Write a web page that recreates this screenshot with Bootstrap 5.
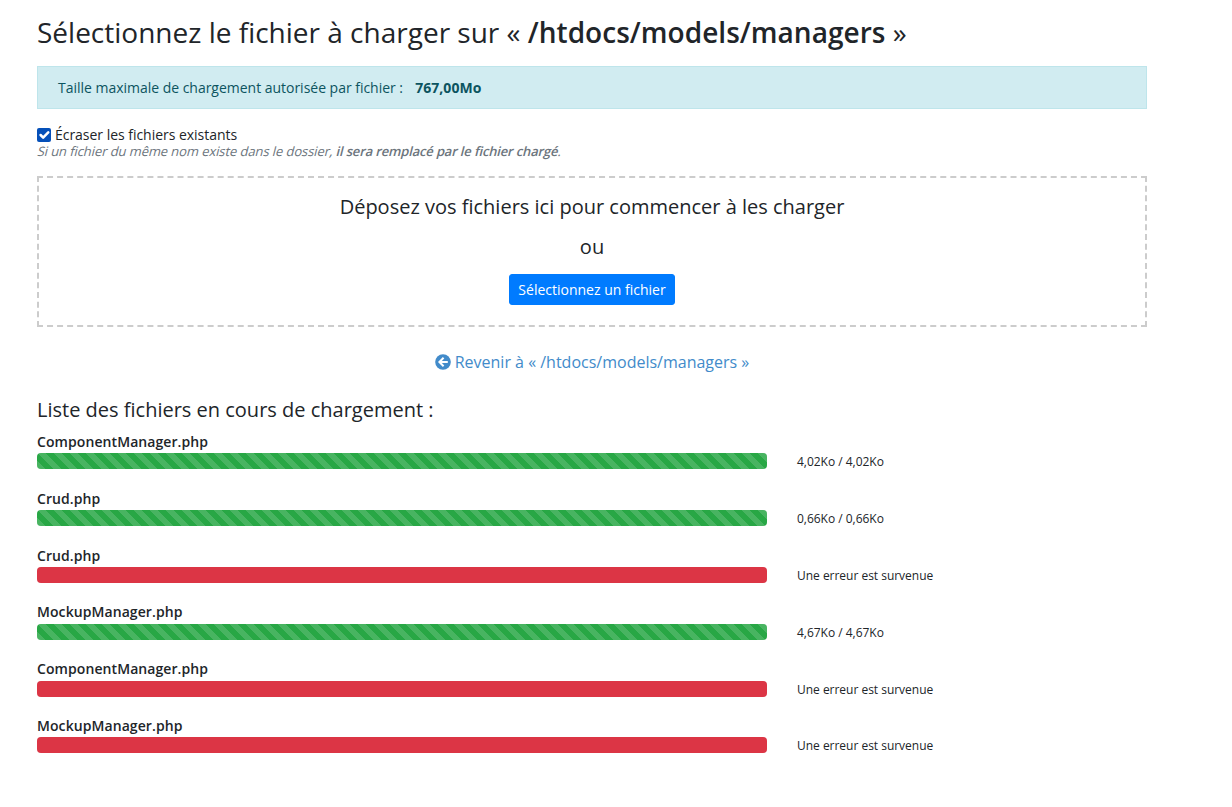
<!DOCTYPE html>
<html lang="fr">
<head>
<meta charset="utf-8">
<meta name="viewport" content="width=device-width, initial-scale=1">
<title>Charger un fichier</title>
<link href="https://cdn.jsdelivr.net/npm/bootstrap@5.3.0/dist/css/bootstrap.min.css" rel="stylesheet">
<style>
  body { font-family: "Open Sans", "Noto Sans", sans-serif; font-size: 14px; line-height: 1.5; color: #212529; }
  .upload-page { width: 1140px; margin-left: 22px; padding: 15px 15px 0; }
  .page-title { font-size: 28px; line-height: 34px; margin-bottom: 17px; font-weight: 400; }
  .page-title strong { font-weight: 600; letter-spacing: .04px; }
  .size-info { background: #d1ecf1; border: 1px solid #bee5eb; color: #0c5460; padding: 10px 20px; height: 43px; margin-bottom: 17px; letter-spacing: -.02px; }
  .size-info strong { margin-left: 8.5px; letter-spacing: .05px; }
  .overwrite { height: 18px; line-height: 18px; gap: 4px; letter-spacing: -.03px; }
  .overwrite .form-check-input { width: 14px; height: 14px; margin: 0; border-radius: 2px; border: 0; }
  .overwrite .form-check-input:checked { background-color: #0550b9; background-size: 17px; }
  /* slanted upright face, wider than the true italic */
  .overwrite-help { font-size: 13px; line-height: 16px; height: 15px; color: #6c757d; transform: skewX(-14deg); margin: -1px 0 18px 1px; letter-spacing: -.085px; }
  .overwrite-help strong { font-weight: 600; letter-spacing: -.16px; }
  .drop-zone { border: 2px dashed #ccc; height: 151px; font-size: 20px; line-height: 30px; padding-top: 14px; }
  .drop-zone p { margin-bottom: 10px; }
  .btn-pick { --bs-btn-bg: #007bff; --bs-btn-border-color: #007bff; --bs-btn-font-size: 14px; --bs-btn-padding-y: 4px; --bs-btn-padding-x: 8px; --bs-btn-border-radius: 3px; width: 166px; height: 31px; line-height: 21px; margin-top: 12px; }
  .back-link { font-size: 16px; line-height: 24px; margin-top: 23px; color: #428bca; gap: 4px; }
  .list-title { font-size: 20px; line-height: 24px; margin: 24px 0 9px; font-weight: 400; }
  .upload-row { --bs-gutter-x: 30px; height: 56.8px; }
  .file-name { line-height: 21px; height: 22.4px; font-weight: 600; letter-spacing: .08px; }
  .upload-row .progress { height: 16px; border-radius: 4px; }
  .bar-done { background-color: #28a745; }
  .progress-bar-striped { background-size: 16px 16px; }
  .bar-error { background-color: #dc3545; }
  .upload-status { font-size: 12px; line-height: 18px; padding-top: 22.4px; letter-spacing: -.02px; }
</style>
<script src="https://cdn.jsdelivr.net/npm/bootstrap@5.3.0/dist/js/bootstrap.bundle.min.js"></script>
</head>
<body>
<main class="upload-page">
  <h1 class="page-title">Sélectionnez le fichier à charger sur « <strong>/htdocs/models/managers</strong> »</h1>
  <div class="size-info">Taille maximale de chargement autorisée par fichier : <strong>767,00Mo</strong></div>
  <div class="overwrite d-flex align-items-center">
    <input class="form-check-input" type="checkbox" id="overwrite" checked>
    <label for="overwrite">Écraser les fichiers existants</label>
  </div>
  <div class="overwrite-help">Si un fichier du même nom existe dans le dossier, <strong>il sera remplacé par le fichier chargé</strong>.</div>
  <section class="drop-zone text-center">
    <p>Déposez vos fichiers ici pour commencer à les charger</p>
    <p>ou</p>
    <button type="button" class="btn btn-primary btn-pick d-block mx-auto">Sélectionnez un fichier</button>
  </section>
  <a href="#" class="back-link d-flex justify-content-center align-items-center text-decoration-none">
    <svg width="16" height="16" viewBox="0 0 16 16" aria-hidden="true"><circle cx="8" cy="8" r="7.8" fill="currentColor"/><path d="M8.6 3.8 4.4 8l4.2 4.2M4.8 8h8" fill="none" stroke="#fff" stroke-width="2"/></svg>
    <span>Revenir à « /htdocs/models/managers »</span>
  </a>
  <h2 class="list-title">Liste des fichiers en cours de chargement :</h2>
  <div class="row upload-row">
    <div class="col-8"><div class="file-name">ComponentManager.php</div><div class="progress"><div class="progress-bar progress-bar-striped bar-done w-100"></div></div></div>
    <div class="col-4 upload-status">4,02Ko / 4,02Ko</div>
  </div>
  <div class="row upload-row">
    <div class="col-8"><div class="file-name">Crud.php</div><div class="progress"><div class="progress-bar progress-bar-striped bar-done w-100"></div></div></div>
    <div class="col-4 upload-status">0,66Ko / 0,66Ko</div>
  </div>
  <div class="row upload-row">
    <div class="col-8"><div class="file-name">Crud.php</div><div class="progress"><div class="progress-bar bar-error w-100"></div></div></div>
    <div class="col-4 upload-status">Une erreur est survenue</div>
  </div>
  <div class="row upload-row">
    <div class="col-8"><div class="file-name">MockupManager.php</div><div class="progress"><div class="progress-bar progress-bar-striped bar-done w-100"></div></div></div>
    <div class="col-4 upload-status">4,67Ko / 4,67Ko</div>
  </div>
  <div class="row upload-row">
    <div class="col-8"><div class="file-name">ComponentManager.php</div><div class="progress"><div class="progress-bar bar-error w-100"></div></div></div>
    <div class="col-4 upload-status">Une erreur est survenue</div>
  </div>
  <div class="row upload-row">
    <div class="col-8"><div class="file-name">MockupManager.php</div><div class="progress"><div class="progress-bar bar-error w-100"></div></div></div>
    <div class="col-4 upload-status">Une erreur est survenue</div>
  </div>
</main>
</body>
</html>
